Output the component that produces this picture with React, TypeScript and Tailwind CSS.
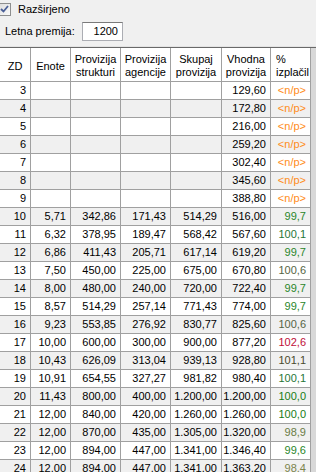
import React from "react";

type Row = {
    zd: number;
    enote?: string;
    strukt?: string;
    agen?: string;
    skupaj?: string;
    vhodna: string;
    pct?: string;
    color?: string;
};

const ROWS: Row[] = [
    { zd: 3, vhodna: "129,60" },
    { zd: 4, vhodna: "172,80" },
    { zd: 5, vhodna: "216,00" },
    { zd: 6, vhodna: "259,20" },
    { zd: 7, vhodna: "302,40" },
    { zd: 8, vhodna: "345,60" },
    { zd: 9, vhodna: "388,80" },
    { zd: 10, enote: "5,71", strukt: "342,86", agen: "171,43", skupaj: "514,29", vhodna: "516,00", pct: "99,7", color: "text-[#2a862a]" },
    { zd: 11, enote: "6,32", strukt: "378,95", agen: "189,47", skupaj: "568,42", vhodna: "567,60", pct: "100,1", color: "text-[#267636]" },
    { zd: 12, enote: "6,86", strukt: "411,43", agen: "205,71", skupaj: "617,14", vhodna: "619,20", pct: "99,7", color: "text-[#2a862a]" },
    { zd: 13, enote: "7,50", strukt: "450,00", agen: "225,00", skupaj: "675,00", vhodna: "670,80", pct: "100,6", color: "text-[#566444]" },
    { zd: 14, enote: "8,00", strukt: "480,00", agen: "240,00", skupaj: "720,00", vhodna: "722,40", pct: "99,7", color: "text-[#2a862a]" },
    { zd: 15, enote: "8,57", strukt: "514,29", agen: "257,14", skupaj: "771,43", vhodna: "774,00", pct: "99,7", color: "text-[#2a862a]" },
    { zd: 16, enote: "9,23", strukt: "553,85", agen: "276,92", skupaj: "830,77", vhodna: "825,60", pct: "100,6", color: "text-[#566444]" },
    { zd: 17, enote: "10,00", strukt: "600,00", agen: "300,00", skupaj: "900,00", vhodna: "877,20", pct: "102,6", color: "text-[#c00e38]" },
    { zd: 18, enote: "10,43", strukt: "626,09", agen: "313,04", skupaj: "939,13", vhodna: "928,80", pct: "101,1", color: "text-[#4a4a2c]" },
    { zd: 19, enote: "10,91", strukt: "654,55", agen: "327,27", skupaj: "981,82", vhodna: "980,40", pct: "100,1", color: "text-[#267636]" },
    { zd: 20, enote: "11,43", strukt: "800,00", agen: "400,00", skupaj: "1.200,00", vhodna: "1.200,00", pct: "100,0", color: "text-[#177c17]" },
    { zd: 21, enote: "12,00", strukt: "840,00", agen: "420,00", skupaj: "1.260,00", vhodna: "1.260,00", pct: "100,0", color: "text-[#177c17]" },
    { zd: 22, enote: "12,00", strukt: "870,00", agen: "435,00", skupaj: "1.305,00", vhodna: "1.320,00", pct: "98,9", color: "text-[#6a7c44]" },
    { zd: 23, enote: "12,00", strukt: "894,00", agen: "447,00", skupaj: "1.341,00", vhodna: "1.346,40", pct: "99,6", color: "text-[#2a862a]" },
    { zd: 24, enote: "12,00", strukt: "894,00", agen: "447,00", skupaj: "1.341,00", vhodna: "1.363,20", pct: "98,4", color: "text-[#7c844c]" },
];

const COLS = "grid grid-cols-[31px_40px_50px_50px_51px_49px_40px]";
const cell = "border-r border-b border-[#a0a0a0] h-[18px] leading-[17px] text-right pr-[4px] whitespace-nowrap";
const head = "border-r border-b border-[#a0a0a0] h-[34px] flex items-center justify-center text-center leading-[13px] pt-[3px]";

export default function App() {
    return (
        <div className="w-[316px] h-[472px] overflow-hidden bg-white text-black text-[11px] font-['Liberation_Sans',Arial,sans-serif]">
            {/* Options panel */}
            <div className="h-[47px] bg-[#f0f0f0] border-b border-[#e3e3e3] flex flex-col">
                <div className="flex items-center h-[16px] mt-[1px]">
                    <div className="ml-[-2px] w-[13px] h-[13px] border border-[#8e8f8f] bg-gradient-to-br from-[#dcdcdc] to-[#fbfbfb] flex items-center justify-center">
                        <svg width="9" height="8" viewBox="0 0 9 8">
                            <path d="M1 4 L3.5 6.5 L8 1" fill="none" stroke="#4a5f97" strokeWidth="1.8" />
                        </svg>
                    </div>
                    <span className="ml-[7px]">Razširjeno</span>
                </div>
                <div className="flex items-center mt-[5px] h-[19px]">
                    <span className="ml-[5px] w-[77px]">Letna premija:</span>
                    <div className="w-[41px] h-[19px] bg-white border border-[#abadb3] border-t-[#7a7a7a] text-right pr-[4px] leading-[17px]">
                        1200
                    </div>
                </div>
            </div>

            {/* Grid */}
            <div className="flex border-t border-[#696969]">
                <div className="w-[311px]">
                    <div className={`${COLS} bg-white`}>
                        <div className={head}>ZD</div>
                        <div className={head}>Enote</div>
                        <div className={head}>Provizija<br />strukturi</div>
                        <div className={head}>Provizija<br />agencije</div>
                        <div className={head}>Skupaj<br />provizija</div>
                        <div className={head}>Vhodna<br />provizija</div>
                        <div className={`${head} !justify-start !text-left pl-[5px]`}>%<br />izplačil</div>
                    </div>
                    {ROWS.map((r, i) => (
                        <div key={r.zd} className={`${COLS} ${i % 2 === 1 ? "bg-[#f0f0f0]" : "bg-white"}`}>
                            <div className={cell}>{r.zd}</div>
                            <div className={cell}>{r.enote}</div>
                            <div className={cell}>{r.strukt}</div>
                            <div className={cell}>{r.agen}</div>
                            <div className={cell}>{r.skupaj}</div>
                            <div className={cell}>{r.vhodna}</div>
                            <div className={`${cell} ${r.pct ? r.color : "text-[#ff8c1a]"}`}>{r.pct ?? "<n/p>"}</div>
                        </div>
                    ))}
                </div>
                {/* scrollbar edge */}
                <div className="w-[5px] bg-[#d8d8d8]" />
            </div>
        </div>
    );
}
